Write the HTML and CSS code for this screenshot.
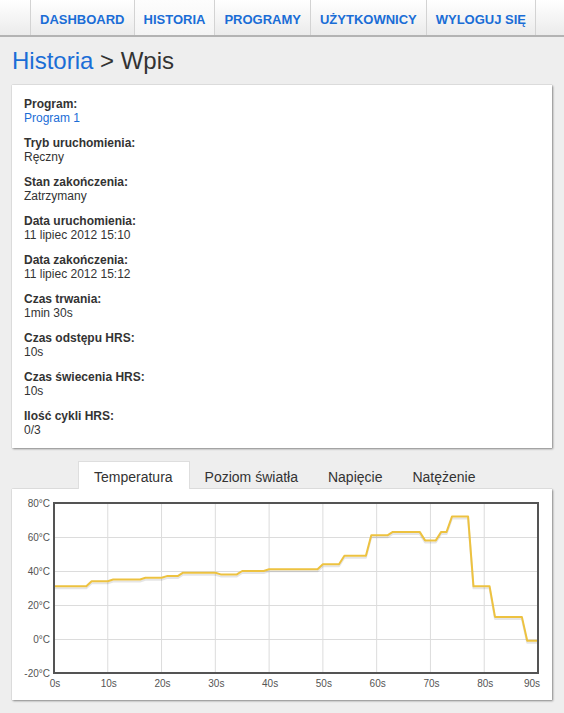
FILE: index.html
```html
<!DOCTYPE html>
<html lang="pl">
<head>
<meta charset="utf-8">
<title>Historia &gt; Wpis</title>
<link rel="stylesheet" href="styles.css">
</head>
<body>
<nav class="topnav">
  <ul class="menu">
    <li class="menu-item"><a href="#">DASHBOARD</a></li>
    <li class="menu-item active"><a href="#">HISTORIA</a></li>
    <li class="menu-item"><a href="#">PROGRAMY</a></li>
    <li class="menu-item"><a href="#">UŻYTKOWNICY</a></li>
    <li class="menu-item"><a href="#">WYLOGUJ SIĘ</a></li>
  </ul>
</nav>

<main class="page">
  <h1 class="title"><a href="#">Historia</a> &gt; Wpis</h1>

  <section class="card details">
    <div class="field"><div class="label">Program:</div><div class="value"><a href="#">Program 1</a></div></div>
    <div class="field"><div class="label">Tryb uruchomienia:</div><div class="value">Ręczny</div></div>
    <div class="field"><div class="label">Stan zakończenia:</div><div class="value">Zatrzymany</div></div>
    <div class="field"><div class="label">Data uruchomienia:</div><div class="value">11 lipiec 2012 15:10</div></div>
    <div class="field"><div class="label">Data zakończenia:</div><div class="value">11 lipiec 2012 15:12</div></div>
    <div class="field"><div class="label">Czas trwania:</div><div class="value">1min 30s</div></div>
    <div class="field"><div class="label">Czas odstępu HRS:</div><div class="value">10s</div></div>
    <div class="field"><div class="label">Czas świecenia HRS:</div><div class="value">10s</div></div>
    <div class="field"><div class="label">Ilość cykli HRS:</div><div class="value">0/3</div></div>
  </section>

  <ul class="tabs">
    <li class="tab active">Temperatura</li>
    <li class="tab">Poziom światła</li>
    <li class="tab">Napięcie</li>
    <li class="tab">Natężenie</li>
  </ul>

  <section class="card chart-card">
    <svg class="chart" width="540" height="211" viewBox="0 0 540 211">
      <g class="grid">
        <line x1="95.78" y1="14" x2="95.78" y2="184"/>
        <line x1="149.56" y1="14" x2="149.56" y2="184"/>
        <line x1="203.33" y1="14" x2="203.33" y2="184"/>
        <line x1="257.11" y1="14" x2="257.11" y2="184"/>
        <line x1="310.89" y1="14" x2="310.89" y2="184"/>
        <line x1="364.67" y1="14" x2="364.67" y2="184"/>
        <line x1="418.44" y1="14" x2="418.44" y2="184"/>
        <line x1="472.22" y1="14" x2="472.22" y2="184"/>
        <line x1="42" y1="48.5" x2="526" y2="48.5"/>
        <line x1="42" y1="82.5" x2="526" y2="82.5"/>
        <line x1="42" y1="116.5" x2="526" y2="116.5"/>
        <line x1="42" y1="150.5" x2="526" y2="150.5"/>
      </g>
      <g transform="translate(42,14)">
        <polyline class="series-shadow" transform="translate(0,2)" points="0,83.3 32.27,83.3 37.64,78.2 53.78,78.2 59.16,76.5 86.04,76.5 91.42,74.8 107.56,74.8 112.93,73.1 123.69,73.1 129.07,69.7 161.33,69.7 166.71,71.4 182.84,71.4 188.22,68 209.73,68 215.11,66.3 263.51,66.3 268.89,61.2 285.02,61.2 290.4,52.7 311.91,52.7 317.29,32.3 333.42,32.3 338.8,28.9 365.69,28.9 371.07,37.4 381.82,37.4 387.2,28.9 392.58,28.9 397.96,13.6 414.09,13.6 419.47,83.3 435.6,83.3 440.98,113.9 467.87,113.9 473.24,137.7 484,137.7"/>
        <polyline class="series" points="0,83.3 32.27,83.3 37.64,78.2 53.78,78.2 59.16,76.5 86.04,76.5 91.42,74.8 107.56,74.8 112.93,73.1 123.69,73.1 129.07,69.7 161.33,69.7 166.71,71.4 182.84,71.4 188.22,68 209.73,68 215.11,66.3 263.51,66.3 268.89,61.2 285.02,61.2 290.4,52.7 311.91,52.7 317.29,32.3 333.42,32.3 338.8,28.9 365.69,28.9 371.07,37.4 381.82,37.4 387.2,28.9 392.58,28.9 397.96,13.6 414.09,13.6 419.47,83.3 435.6,83.3 440.98,113.9 467.87,113.9 473.24,137.7 484,137.7"/>
      </g>
      <rect class="plot-border" x="42" y="14" width="484" height="170"/>
      <g class="ylabels">
        <text x="38" y="17.5">80°C</text>
        <text x="38" y="51.5">60°C</text>
        <text x="38" y="85.5">40°C</text>
        <text x="38" y="119.5">20°C</text>
        <text x="38" y="153.5">0°C</text>
        <text x="38" y="187.5">-20°C</text>
      </g>
      <g class="xlabels">
        <text x="43" y="198">0s</text>
        <text x="96.78" y="198">10s</text>
        <text x="150.56" y="198">20s</text>
        <text x="204.33" y="198">30s</text>
        <text x="258.11" y="198">40s</text>
        <text x="311.89" y="198">50s</text>
        <text x="365.67" y="198">60s</text>
        <text x="419.44" y="198">70s</text>
        <text x="473.22" y="198">80s</text>
        <text class="last" x="528" y="198">90s</text>
      </g>
    </svg>
  </section>
</main>
</body>
</html>
```

FILE: styles.css
```css
* {
  box-sizing: border-box;
}

html, body {
  margin: 0;
  padding: 0;
}

body {
  background: #eeeeee;
  font-family: "Liberation Sans", Arial, sans-serif;
  color: #333333;
}

a {
  color: #1a6dd6;
  text-decoration: none;
}

/* ---------- top navigation ---------- */
.topnav {
  background: linear-gradient(#ffffff, #ebebeb);
  border-bottom: 2px solid #b3b3b3;
  height: 37px;
  padding-left: 30px;
}

.menu {
  list-style: none;
  margin: 0;
  padding: 0;
  display: flex;
  height: 35px;
}

.menu-item {
  border-left: 1px solid #d3d3d3;
  height: 35px;
}

.menu-item:last-child {
  border-right: 1px solid #d3d3d3;
}

.menu-item a {
  display: block;
  padding: 12px 9px 8px;
  line-height: 15px;
  font-size: 13px;
  font-weight: bold;
  color: #1a6dd6;
}

.menu-item.active {
  background: linear-gradient(#fdfdfd, #f4f4f4);
}

/* ---------- page ---------- */
.page {
  padding: 0 12px 13px;
}

.title {
  margin: 10px 0 10px;
  font-size: 24px;
  line-height: 28px;
  font-weight: normal;
  color: #333333;
}

.card {
  background: #ffffff;
  box-shadow: 0 0 1px rgba(0, 0, 0, 0.3), 1px 1px 2px rgba(0, 0, 0, 0.4);
}

.details {
  padding: 12px 12px 11px;
  font-size: 12px;
  line-height: 14px;
}

.field + .field {
  margin-top: 11px;
}

.label {
  font-weight: bold;
  color: #333333;
}

.value {
  color: #333333;
}

/* ---------- chart tabs ---------- */
.tabs {
  list-style: none;
  margin: 13px 0 0 66px;
  padding: 0;
  display: flex;
}

.tab {
  padding: 7px 14px 5px;
  line-height: 16px;
  font-size: 14px;
  color: #333333;
  border: 1px solid transparent;
  border-bottom: 0;
  height: 28px;
}

.tab.active {
  padding-left: 15px;
  padding-right: 16px;
  background: #ffffff;
  border-color: #dedede;
}

.chart-card {
  height: 211px;
}

.chart {
  display: block;
}

.grid line {
  stroke: #dcdcdc;
  stroke-width: 1;
}

.plot-border {
  fill: none;
  stroke: #545454;
  stroke-width: 2;
}

.series {
  fill: none;
  stroke: #edc240;
  stroke-width: 2;
  stroke-linejoin: round;
}

.series-shadow {
  fill: none;
  stroke: rgba(0, 0, 0, 0.1);
  stroke-width: 2;
  stroke-linejoin: round;
}

.ylabels text,
.xlabels text {
  font-family: "Liberation Sans", Arial, sans-serif;
  font-size: 10px;
  fill: #545454;
}

.ylabels text {
  text-anchor: end;
}

.xlabels text {
  text-anchor: middle;
}

.xlabels text.last {
  text-anchor: end;
}
```
